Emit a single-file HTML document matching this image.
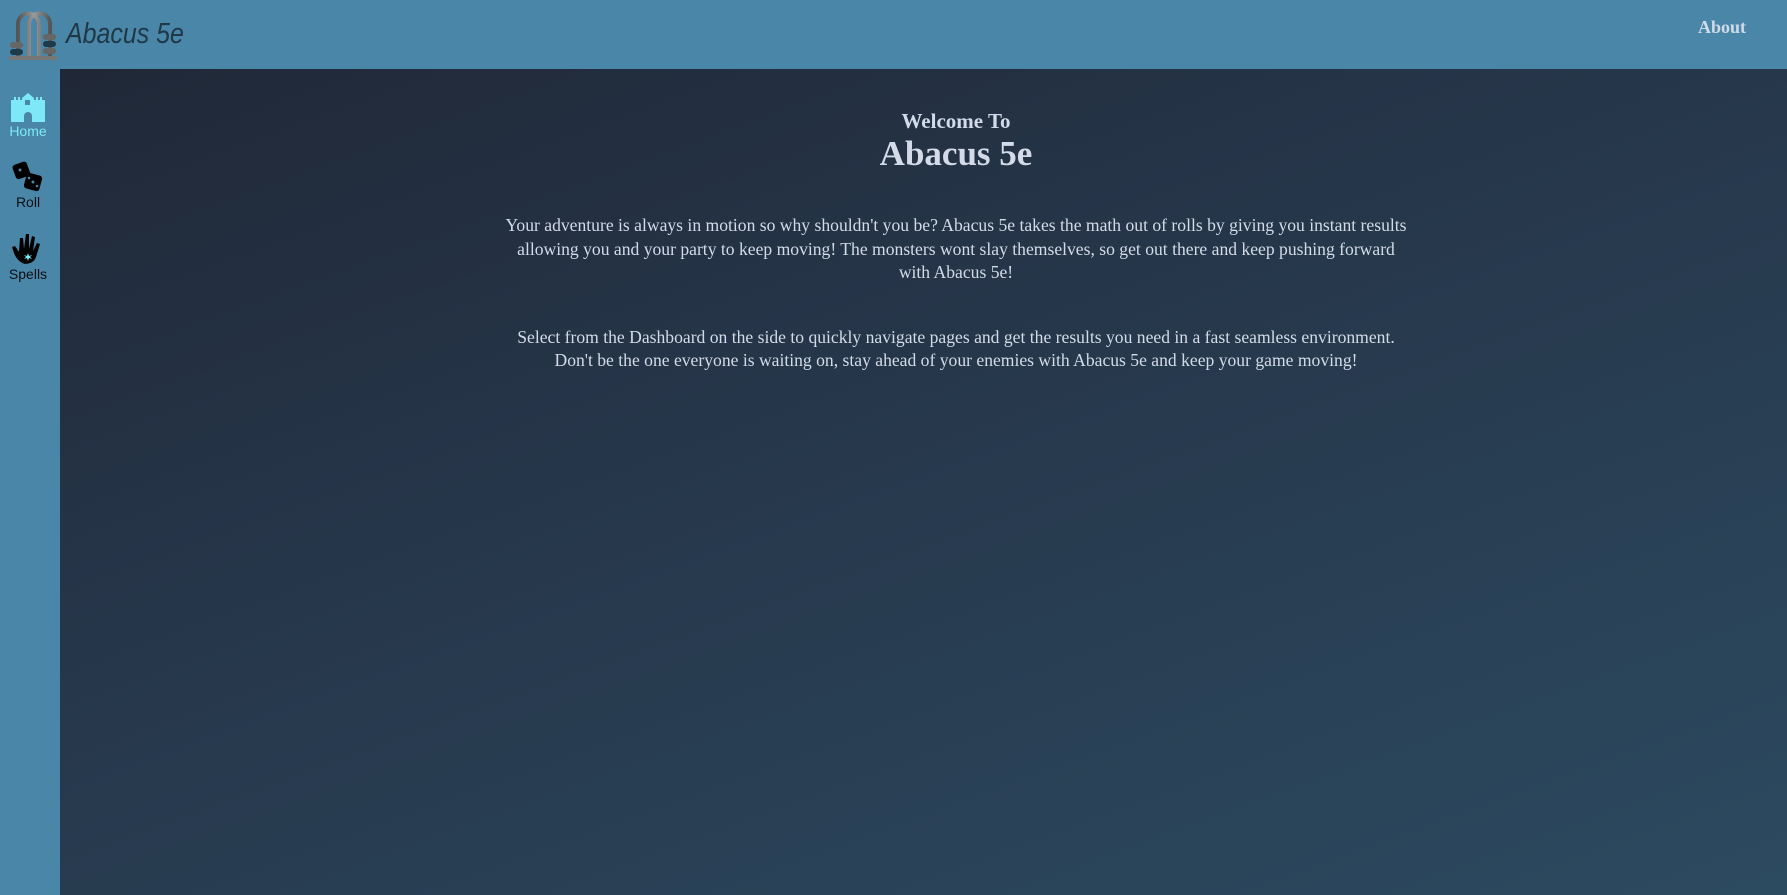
<!DOCTYPE html>
<html><head><meta charset="utf-8"><style>
html,body{margin:0;padding:0;width:1787px;height:895px;overflow:hidden;font-family:"Liberation Serif",serif}
body{background:#4a86a8;position:relative}
#main{position:absolute;left:60px;top:69px;right:0;bottom:0;background:linear-gradient(160deg,#202837 0%,#26364a 40%,#2c4a60 100%)}
#logotext{position:absolute;left:66px;top:18px;font-family:"Liberation Sans",sans-serif;font-style:italic;font-size:29px;color:#1e3846;transform:scaleX(0.86);transform-origin:left}
#about{position:absolute;left:1698px;top:17px;font-weight:bold;font-size:18px;color:#cfdbe8}
.nav{position:absolute;left:0;width:56px;text-align:center;font-family:"Liberation Sans",sans-serif;font-size:14px;color:#0b0f14}
#content{position:absolute;left:496px;width:920px;top:107px;text-align:center;color:#d3dbe8}
h3{margin:0;font-size:21px;line-height:28px}
h1{margin:0;font-size:35px;line-height:38px}
p{font-size:17.6px;line-height:23.5px;margin:0}
</style></head><body>
<svg style="position:absolute;left:0;top:0" width="70" height="70" viewBox="0 0 70 70">
<defs><linearGradient id="g" x1="0" x2="1"><stop offset="0" stop-color="#555"/><stop offset=".5" stop-color="#9a9a9a"/><stop offset="1" stop-color="#555"/></linearGradient></defs>
<path d="M18 57V24a10.5 10.5 0 0 1 21 0V57M29 57V24a10.5 10.5 0 0 1 21 0V57" fill="none" stroke="url(#g)" stroke-width="4"/>
<rect x="10" y="42" width="13" height="6" rx="3" fill="#666"/><rect x="10" y="49" width="13" height="6" rx="3" fill="#1f3a48"/>
<rect x="43" y="34" width="13" height="6" rx="3" fill="#666"/><rect x="43" y="41" width="13" height="6" rx="3" fill="#1f3a48"/><rect x="43" y="48" width="13" height="6" rx="3" fill="#666"/>
<rect x="9" y="56" width="48" height="4" fill="#777"/></svg>
<div id="logotext">Abacus 5e</div>
<div id="about">About</div>
<div class="nav" style="top:90px;color:#7de8f7"><svg width="34" height="32" viewBox="0 0 34 32"><path fill="#7de8f7" d="M0 10h3V7h2v3h2V7h2v3h2V8l6-5 6 5v2h2V7h2v3h2V7h2v3h3v22H0z"/><rect x="14" y="10" width="5" height="5" fill="#4a86a8"/><path d="M13 32v-6a4 4 0 0 1 8 0v6z" fill="#4a86a8"/></svg><div style="margin-top:-2px">Home</div></div>
<div class="nav" style="top:161px"><svg width="34" height="32" viewBox="0 0 34 32"><rect x="3" y="2" width="15" height="15" rx="3" transform="rotate(-20 10 10)" fill="#000"/><rect x="14" y="13" width="16" height="16" rx="3" transform="rotate(15 22 21)" fill="#000"/><circle cx="9" cy="9" r="1.5" fill="#4a86a8"/><circle cx="22" cy="21" r="1.5" fill="#4a86a8"/><circle cx="18" cy="17" r="1.3" fill="#4a86a8"/><circle cx="26" cy="25" r="1.3" fill="#4a86a8"/></svg><div style="margin-top:-2px">Roll</div></div>
<div class="nav" style="top:233px"><svg width="34" height="32" viewBox="0 0 34 32"><path fill="#000" d="M14 31C8 29 5 25 3 20L1 14l3-1 4 6 1-14 3 0 1 11 2-15h3l0 15 3-13 3 1-2 14 4-8 3 1-4 13c-2 5-5 7-14 7z"/><path d="M17 20l1 3 3-1-2 2 2 2-3-1-1 3-1-3-3 1 2-2-2-2 3 1z" fill="#7de8f7"/></svg><div style="margin-top:-2px">Spells</div></div>
<div id="main"></div>
<div id="content">
<h3>Welcome To</h3>
<h1>Abacus 5e</h1>
<p style="margin-top:41px">Your adventure is always in motion so why shouldn't you be? Abacus 5e takes the math out of rolls by giving you instant results<br>allowing you and your party to keep moving! The monsters wont slay themselves, so get out there and keep pushing forward<br>with Abacus 5e!</p>
<p style="margin-top:41px">Select from the Dashboard on the side to quickly navigate pages and get the results you need in a fast seamless environment.<br>Don't be the one everyone is waiting on, stay ahead of your enemies with Abacus 5e and keep your game moving!</p>
</div>
</body></html>
